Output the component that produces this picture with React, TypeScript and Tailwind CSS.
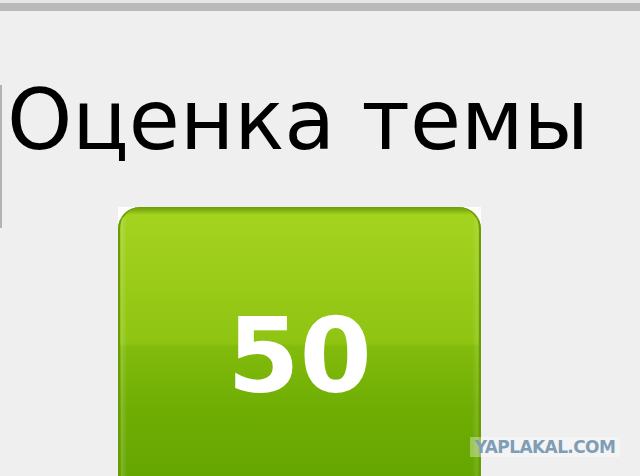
export default function App() {
  return (
    <div className="relative w-[640px] h-[476px] overflow-hidden bg-[#efefef]">
      {/* top frame bar */}
      <div className="h-[3px] bg-[#e6e6e6]" />
      <div className="h-[8px] bg-[#b9b9b9]" />

      <div className="flex">
        {/* left frame edge */}
        <div className="w-[2px] h-[143px] mt-[74px] bg-[#b3b3b3] shrink-0" />

        <div className="flex flex-col pl-[5px]">
          <h1
            className="mt-[68px] text-[83px] leading-[83px] text-black whitespace-nowrap"
            style={{ fontFamily: '"DejaVu Sans", Verdana, sans-serif' }}
          >
            Оценка темы
          </h1>

          {/* rating badge */}
          <div className="mt-[45px] ml-[111px] w-[363px] h-[300px] bg-white">
            <div className="relative w-full h-full rounded-t-[22px] overflow-hidden bg-[linear-gradient(180deg,#6c9c08_0px,#7fae12_3px,#a4d31f_8px,#9ccd1a_60px,#8fc412_136px,#82bb0c_140px,#70ae04_200px,#61a200_300px)] shadow-[inset_2px_0_0_#6a9c06,inset_-2px_0_0_#6a9c06]">
              {/* side highlights */}
              <div className="absolute left-[3px] top-[10px] bottom-0 w-[6px] bg-[linear-gradient(90deg,rgba(255,255,255,0.18),rgba(255,255,255,0))]" />
              <div className="absolute right-[3px] top-[10px] bottom-0 w-[6px] bg-[linear-gradient(270deg,rgba(255,255,255,0.12),rgba(255,255,255,0))]" />
              <div
                className="pt-[89px] text-center text-white font-bold text-[104px] leading-[120px]"
                style={{ fontFamily: '"DejaVu Sans", Verdana, sans-serif' }}
              >
                50
              </div>
            </div>
          </div>
        </div>
      </div>

      {/* site watermark */}
      <div
        className="absolute left-[470px] top-[437px] w-[150px] h-[20px] bg-[rgba(255,255,255,0.35)] flex items-center justify-center text-[17px] leading-none font-black text-[#809db6] tracking-[-0.6px]"
        style={{ fontFamily: '"DejaVu Sans", Verdana, sans-serif' }}
      >
        YAPLAKAL.COM
      </div>
    </div>
  );
}
